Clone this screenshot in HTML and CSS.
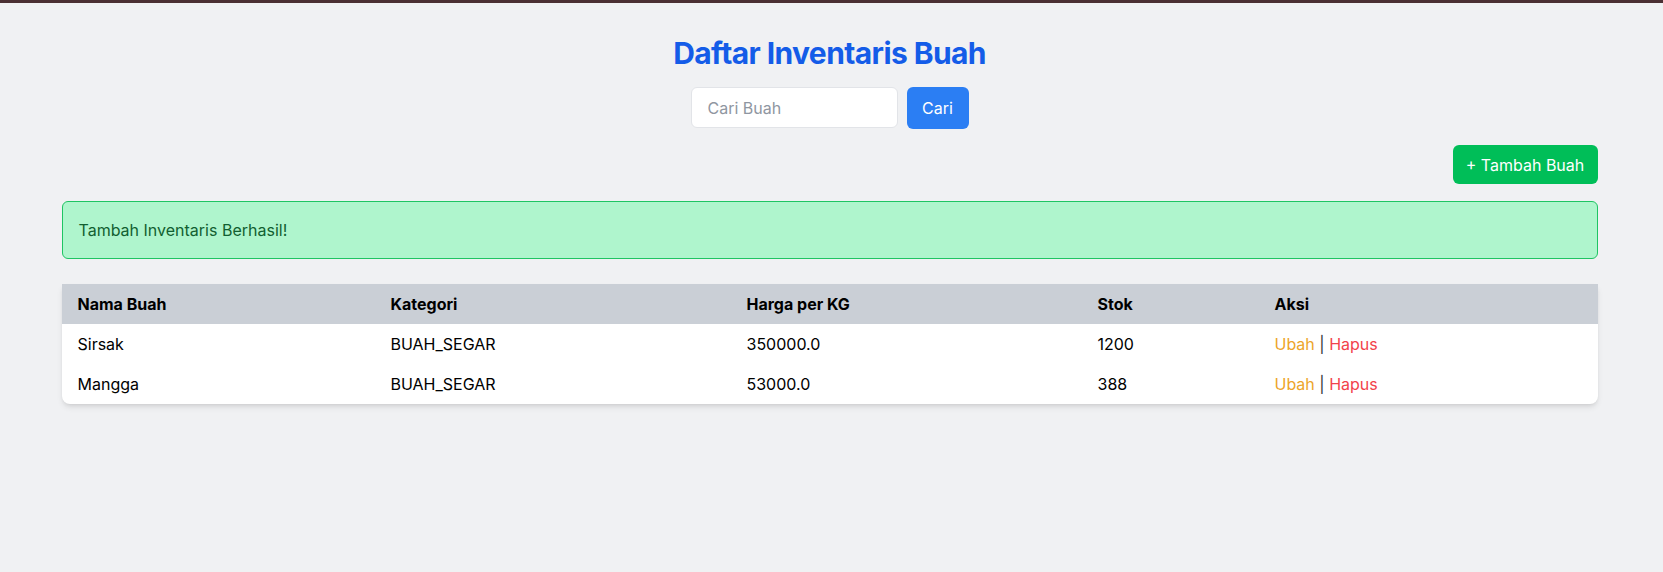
FILE: index.html
```html
<!DOCTYPE html>
<html lang="id">
<head>
<meta charset="utf-8">
<title>Daftar Inventaris Buah</title>
<link rel="stylesheet" href="styles.css">
</head>
<body>
<div class="topbar"></div>
<main class="container">
  <h1 class="title">Daftar Inventaris Buah</h1>
  <form class="search">
    <input class="search-input" type="text" placeholder="Cari Buah">
    <button class="btn btn-blue" type="button">Cari</button>
  </form>
  <div class="actions">
    <button class="btn btn-green" type="button">+ Tambah Buah</button>
  </div>
  <div class="alert">Tambah Inventaris Berhasil!</div>
  <table class="table">
    <colgroup>
      <col class="c1"><col class="c2"><col class="c3"><col class="c4"><col class="c5">
    </colgroup>
    <thead>
      <tr><th>Nama Buah</th><th>Kategori</th><th>Harga per KG</th><th>Stok</th><th>Aksi</th></tr>
    </thead>
    <tbody>
      <tr><td>Sirsak</td><td>BUAH_SEGAR</td><td>350000.0</td><td>1200</td><td><a class="edit" href="#">Ubah</a> <span class="sep">|</span> <a class="del" href="#">Hapus</a></td></tr>
      <tr><td>Mangga</td><td>BUAH_SEGAR</td><td>53000.0</td><td>388</td><td><a class="edit" href="#">Ubah</a> <span class="sep">|</span> <a class="del" href="#">Hapus</a></td></tr>
    </tbody>
  </table>
</main>
</body>
</html>
```
FILE: styles.css
```css
* { box-sizing: border-box; }
html, body { margin: 0; padding: 0; }
body {
  background: #f0f1f3;
  font-family: Inter, "Liberation Sans", sans-serif;
  font-size: 16px;
  line-height: 24px;
  color: #000;
  min-height: 572px;
  padding-right: 4px;
}
.topbar { height: 3px; background: #4a2f33; margin-right: -4px; }
.container {
  max-width: 1536px;
  margin: 0 auto;
  padding-top: 32px;
}
.title {
  margin: 0 0 16px;
  text-align: center;
  font-size: 30px;
  line-height: 36px;
  font-weight: 700;
  letter-spacing: -0.6px;
  color: #145ce8;
}
.search {
  display: flex;
  justify-content: center;
  gap: 9px;
  margin: 0 0 16px;
}
.search-input {
  width: 207px;
  height: 41px;
  padding: 8px 16px;
  border: 1px solid #e2e4e8;
  border-radius: 6px;
  background: #fff;
  font: inherit;
  color: #000;
  outline: none;
}
.search-input::placeholder { color: #8f96a1; }
.btn {
  border: 0;
  border-radius: 6px;
  color: #fff;
  font: inherit;
  padding: 8px 16px;
  cursor: pointer;
}
.btn-blue { background: #2b7ef3; height: 42px; width: 62px; padding: 0; }
.btn-green { background: #00be58; height: 39px; width: 145px; padding: 0; }
.actions {
  display: flex;
  justify-content: flex-end;
  margin-bottom: 17px;
}
.alert {
  background: #aff5cd;
  border: 1px solid #1fc463;
  border-radius: 6px;
  color: #125f31;
  padding: 16px;
  margin-bottom: 25px;
}
.table {
  width: 100%;
  border-collapse: separate;
  border-spacing: 0;
  background: #fff;
  border-radius: 0 0 8px 8px;
  box-shadow: 0 4px 6px -1px rgba(0,0,0,0.1), 0 2px 4px -2px rgba(0,0,0,0.1);
}
.c1 { width: 313px; }
.c2 { width: 356px; }
.c3 { width: 351px; }
.c4 { width: 177px; }
.c5 { width: 339px; }
.table th {
  background: #cacfd6;
  text-align: left;
  font-weight: 700;
  padding: 8px 16px;
  height: 40px;
}
.table td {
  padding: 8px 16px;
  height: 40px;
}
.edit { color: #eda52a; text-decoration: none; }
.del { color: #f2424b; text-decoration: none; }
.sep { color: #333; }
```
